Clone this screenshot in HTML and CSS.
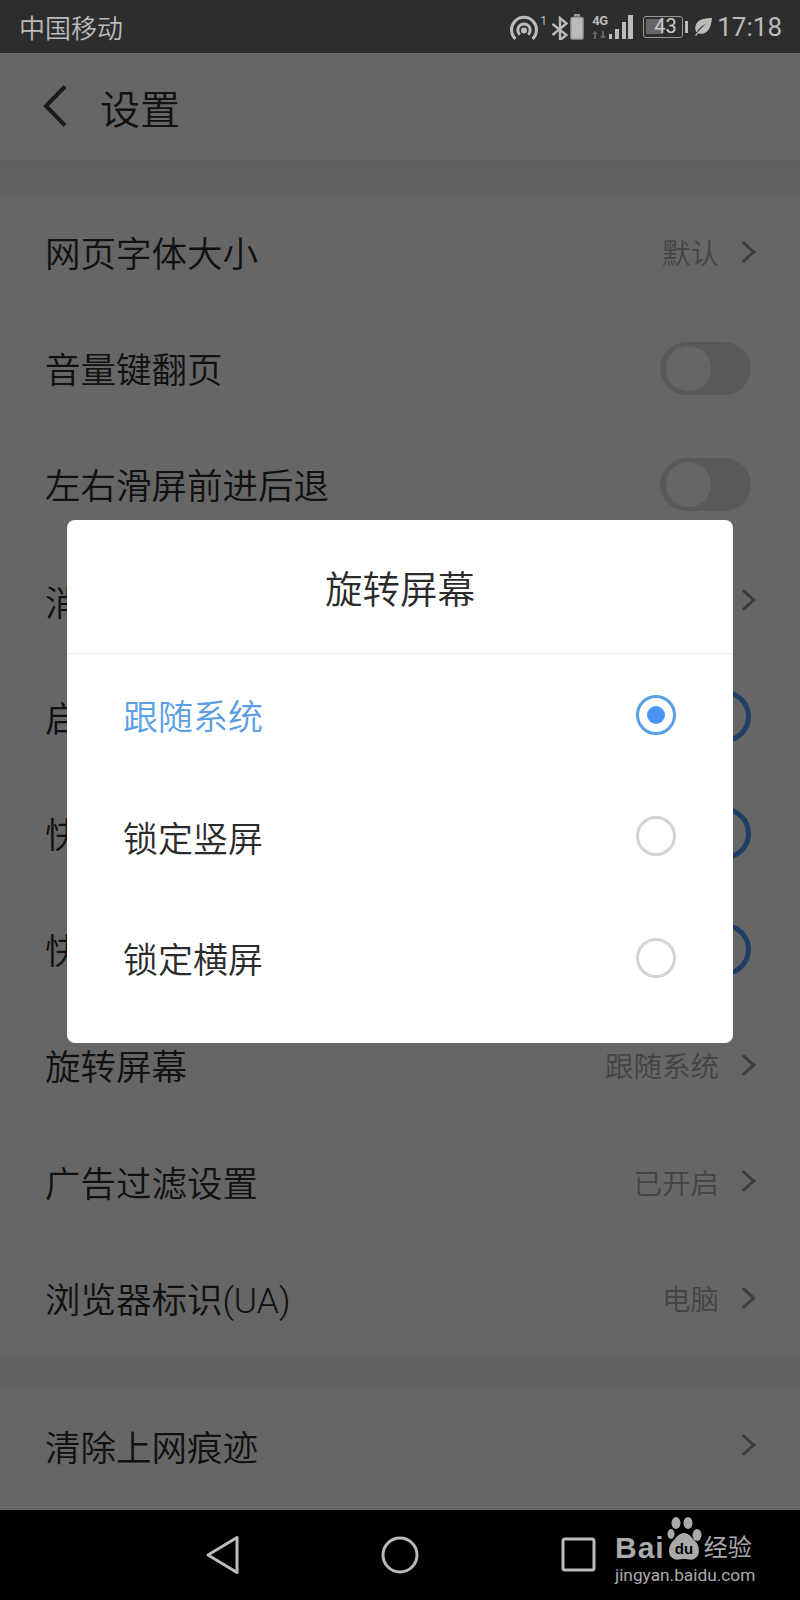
FILE: index.html
```html
<!DOCTYPE html>
<html lang="zh-CN">
<head>
    <meta charset="UTF-8">
    <meta name="viewport" content="width=device-width, initial-scale=1.0">
    <title>设置</title>
    <link rel="stylesheet" href="styles.css">
</head>
<body>
    <div class="status-bar">
        <span class="carrier">中国移动</span>
        <div class="status-icons">
            <svg width="30" height="26" viewBox="0 0 30 26" fill="none" stroke="#bbb" stroke-width="3">
                <path d="M5.500 25a12.500 12.500 0 1 1 17 0"/>
                <path d="M9.800 20.700a6.200 6.200 0 1 1 8.400 0"/>
                <circle cx="14" cy="16.500" r="1.500"/>
            </svg>
            <span class="hot-num">1</span>
            <svg class="ic-bt" width="17" height="26" viewBox="0 0 17 26" fill="none" stroke="#bbb" stroke-width="2.400">
                <path d="M1.500 10l14 11-6.500 5V4l6.500 5.500L1.500 21"/>
            </svg>
            <svg class="ic-batt" width="14" height="26" viewBox="0 0 14 26">
                <rect x="4" y="0" width="6" height="2.500" fill="#999"/>
                <rect x="1" y="3.500" width="12" height="21.500" rx="1.500" fill="#bbb" stroke="#999" stroke-width="1.500"/>
            </svg>
            <div class="net">
                <span class="net-label">4G</span>
                <svg width="14" height="8" viewBox="0 0 14 8" fill="#666">
                    <path d="M3 0l3 3H4v5H2V3H0zM11 8L8 5h2V0h2v5h2z"/>
                </svg>
            </div>
            <svg class="ic-bars" width="24" height="25" viewBox="0 0 24 25" fill="#bbb">
                <rect x="0" y="20" width="3" height="5"/>
                <rect x="6" y="15" width="4" height="10"/>
                <rect x="13" y="8" width="4" height="17"/>
                <rect x="19" y="1" width="5" height="24"/>
            </svg>
            <div class="batt-big">
                <div class="batt-body">43</div>
                <div class="batt-tip"></div>
            </div>
            <svg class="ic-leaf" width="18" height="18" viewBox="0 0 18 18" fill="#bbb">
                <path d="M18 0C9 0 3 2 1.500 8 .8 11 1.500 13 2.500 14.500 5 10 8 7.500 12 6 8.500 8.500 5.500 11.500 1 17.500l1.200.5 2-2.800C7 16.500 11 16 14 12.500 16.500 9.500 17.500 5 18 0z"/>
            </svg>
            <span class="clock">17:18</span>
        </div>
    </div>

    <div class="screen">
        <div class="app-header">
            <svg class="back" width="24" height="42" viewBox="0 0 24 42" fill="none" stroke="#444" stroke-width="4">
                <path d="M22 1.500L3 21l19 19.500"/>
            </svg>
            <span class="app-title">设置</span>
        </div>

        <div class="group">
            <div class="row"><span class="row-name">网页字体大小</span><span class="row-value">默认</span><i class="chev"></i></div>
            <div class="row"><span class="row-name">音量键翻页</span><div class="toggle"></div></div>
            <div class="row"><span class="row-name">左右滑屏前进后退</span><div class="toggle"></div></div>
            <div class="row"><span class="row-name">消息</span><i class="chev"></i></div>
            <div class="row"><span class="row-name">启动</span><div class="toggle on"></div></div>
            <div class="row"><span class="row-name">快速</span><div class="toggle on"></div></div>
            <div class="row"><span class="row-name">快捷</span><div class="toggle on"></div></div>
            <div class="row"><span class="row-name">旋转屏幕</span><span class="row-value">跟随系统</span><i class="chev"></i></div>
            <div class="row"><span class="row-name">广告过滤设置</span><span class="row-value">已开启</span><i class="chev"></i></div>
            <div class="row"><span class="row-name">浏览器标识(UA)</span><span class="row-value">电脑</span><i class="chev"></i></div>
        </div>
        <div class="group group-last">
            <div class="row"><span class="row-name">清除上网痕迹</span><i class="chev"></i></div>
        </div>

        <div class="overlay">
            <div class="dialog">
                <div class="dialog-title">旋转屏幕</div>
                <div class="option selected"><span>跟随系统</span><div class="radio"></div></div>
                <div class="option"><span>锁定竖屏</span><div class="radio"></div></div>
                <div class="option"><span>锁定横屏</span><div class="radio"></div></div>
            </div>
        </div>
    </div>

    <div class="nav-bar">
        <svg width="40" height="40" viewBox="0 0 40 40" fill="none" stroke="#bbb" stroke-width="3" stroke-linejoin="round">
            <path d="M35 2.500v35L6 20z"/>
        </svg>
        <svg width="40" height="40" viewBox="0 0 40 40" fill="none" stroke="#bbb" stroke-width="3">
            <circle cx="20" cy="20" r="17"/>
        </svg>
        <svg width="40" height="40" viewBox="0 0 40 40" fill="none" stroke="#bbb" stroke-width="3" stroke-linejoin="round">
            <rect x="5" y="4" width="31" height="31" rx="2"/>
        </svg>
        <div class="watermark">
            <div class="wm-top">
                <span class="wm-bai">Bai</span>
                <svg class="wm-paw" width="36" height="44" viewBox="0 0 36 44" fill="#aaa">
                    <ellipse cx="5" cy="17" rx="3.500" ry="5"/>
                    <ellipse cx="10" cy="6" rx="4.500" ry="6"/>
                    <ellipse cx="22" cy="6" rx="4.500" ry="6"/>
                    <ellipse cx="31" cy="18" rx="4.500" ry="6"/>
                    <path d="M18 16c-5 0-7 4-11 8-5 5-6 15 1 18 3 1.500 7 0 10 0s7 1.500 10 0c7-3 6-13 1-18-4-4-6-8-11-8z"/>
                    <text class="wm-du" x="18" y="37" text-anchor="middle">du</text>
                </svg>
                <span class="wm-cn">经验</span>
            </div>
            <div class="wm-url">jingyan.baidu.com</div>
        </div>
    </div>
</body>
</html>
```

FILE: styles.css
```css
* {
    box-sizing: border-box;
}

html, body {
    margin: 0;
    padding: 0;
}

body {
    width: 800px;
    height: 1600px;
    overflow: hidden;
    font-family: Roboto, "Noto Sans CJK SC", sans-serif;
    font-weight: 300;
    background: #000;
}

/* Status bar */
.status-bar {
    height: 53px;
    padding: 0 18px 0 19px;
    display: flex;
    align-items: center;
    justify-content: space-between;
    background: #2d2d2d;
    color: #bbb;
}

.carrier {
    font-size: 26px;
    font-weight: 350;
}

.status-icons {
    display: flex;
    align-items: center;
}

.hot-num {
    width: 7px;
    margin-top: -12px;
    font-size: 12px;
    line-height: 14px;
    font-weight: 400;
}

.ic-bt {
    margin-left: 4px;
}

.ic-batt {
    margin-left: 2px;
}

.net {
    width: 15px;
    margin-left: 8px;
    display: flex;
    flex-direction: column;
    gap: 5px;
}

.net-label {
    font-size: 13px;
    line-height: 11px;
    font-weight: 700;
    letter-spacing: -0.5px;
}

.net svg {
    display: block;
}

.ic-bars {
    margin-left: 2px;
}

.batt-big {
    margin-left: 10px;
    display: flex;
    align-items: center;
    gap: 2px;
}

.batt-body {
    width: 40px;
    height: 22px;
    border: 1.500px solid #999;
    border-radius: 3px;
    background: linear-gradient(90deg, #666 48%, transparent 48%) no-repeat 2px 2px / 36px 15px;
    padding-left: 10px;
    font-size: 20px;
    line-height: 19px;
    font-weight: 400;
    color: #ccc;
}

.batt-tip {
    width: 3px;
    height: 12px;
    background: #bbb;
}

.ic-leaf {
    margin-left: 6px;
}

.clock {
    margin-left: 5px;
    font-size: 26px;
    font-weight: 400;
}

/* Settings list, sits under the dim layer */
.screen {
    position: relative;
    height: 1457px;
    background: #f5f5f5;
    overflow: hidden;
}

.app-header {
    position: relative;
    height: 107px;
    padding-left: 43px;
    display: flex;
    align-items: center;
    gap: 33px;
    background: #fff;
    color: #2b2b2b;
    box-shadow: 0 3px 14px rgba(0, 0, 0, 0.05);
}

.back {
    margin-top: -2px;
}

.app-title {
    font-size: 40px;
    font-weight: 350;
}

.group {
    margin-top: 34px;
    background: #fff;
    height: 1162px;
    padding: 0 35px 0 30px;
}

.group-last {
    margin-top: 33px;
    height: 130px;
}

.row {
    height: 116.200px;
    display: flex;
    align-items: center;
    padding: 0 10px 0 15px;
    border-bottom: 1px solid #f9f9f9;
}

.row:last-child {
    border-bottom: none;
}

.group-last .row {
    height: 112px;
}

.row-name {
    flex: 1;
    font-size: 35.500px;
    font-weight: 350;
    color: #2b2b2b;
}

.row-value {
    font-size: 28.500px;
    font-weight: 350;
    color: #aaa;
}

.chev {
    width: 16px;
    height: 16px;
    margin-left: 17px;
    margin-right: 3px;
    border-top: 3.500px solid #999;
    border-right: 3.500px solid #999;
    transform: rotate(45deg) skew(-3deg, -3deg);
}

.toggle {
    position: relative;
    width: 91px;
    height: 53px;
    margin-right: 4px;
    margin-top: 1px;
    border-radius: 27px;
    background: #dedede;
}

.toggle::after {
    content: "";
    position: absolute;
    left: 6px;
    top: 4px;
    width: 45px;
    height: 45px;
    border-radius: 50%;
    background: #fff;
}

.toggle.on {
    background: #fff;
    border: 5px solid #4d9bff;
}

/* Dialog */
.overlay {
    position: absolute;
    inset: 0;
    display: flex;
    align-items: center;
    justify-content: center;
    background: rgba(0, 0, 0, 0.6);
}

.dialog {
    width: 666px;
    height: 523px;
    background: #fff;
    border-radius: 8px;
}

.dialog-title {
    height: 134px;
    display: flex;
    align-items: center;
    justify-content: center;
    font-size: 37.500px;
    font-weight: 350;
    color: #2b2b2b;
    border-bottom: 1px solid #eee;
}

.option {
    height: 121.500px;
    padding: 0 57px 0 56px;
    display: flex;
    align-items: center;
    justify-content: space-between;
    font-size: 35px;
    font-weight: 350;
    color: #2b2b2b;
}

.radio {
    position: relative;
    width: 40px;
    height: 40px;
    border: 3px solid #d4d4d4;
    border-radius: 50%;
}

.option.selected {
    color: #5a9ee4;
}

.option.selected .radio {
    border-color: #5a9ee4;
}

.option.selected .radio::after {
    content: "";
    position: absolute;
    left: 8px;
    top: 8px;
    width: 18px;
    height: 18px;
    border-radius: 50%;
    background: #4a94fa;
}

/* Navigation bar */
.nav-bar {
    position: relative;
    height: 90px;
    display: flex;
    align-items: center;
    justify-content: center;
    gap: 138px;
    background: #000;
}

.watermark {
    position: absolute;
    left: 615px;
    top: 7px;
    color: #aaa;
}

.wm-top {
    display: flex;
    align-items: flex-end;
    height: 44px;
}

.wm-bai {
    font-family: "Liberation Sans", sans-serif;
    font-size: 30px;
    line-height: 28px;
    font-weight: 700;
    letter-spacing: 1px;
    margin-right: 1px;
    margin-bottom: -1px;
}

.wm-paw {
    display: block;
}

.wm-du {
    font-family: "Liberation Sans", sans-serif;
    font-size: 15px;
    font-weight: 700;
    fill: #000;
}

.wm-cn {
    font-size: 24px;
    line-height: 24px;
    font-weight: 400;
    margin-left: 2px;
    margin-bottom: 1px;
}

.wm-url {
    font-size: 17.300px;
    line-height: 20px;
    font-weight: 400;
    margin-top: 4px;
    white-space: nowrap;
}
```
